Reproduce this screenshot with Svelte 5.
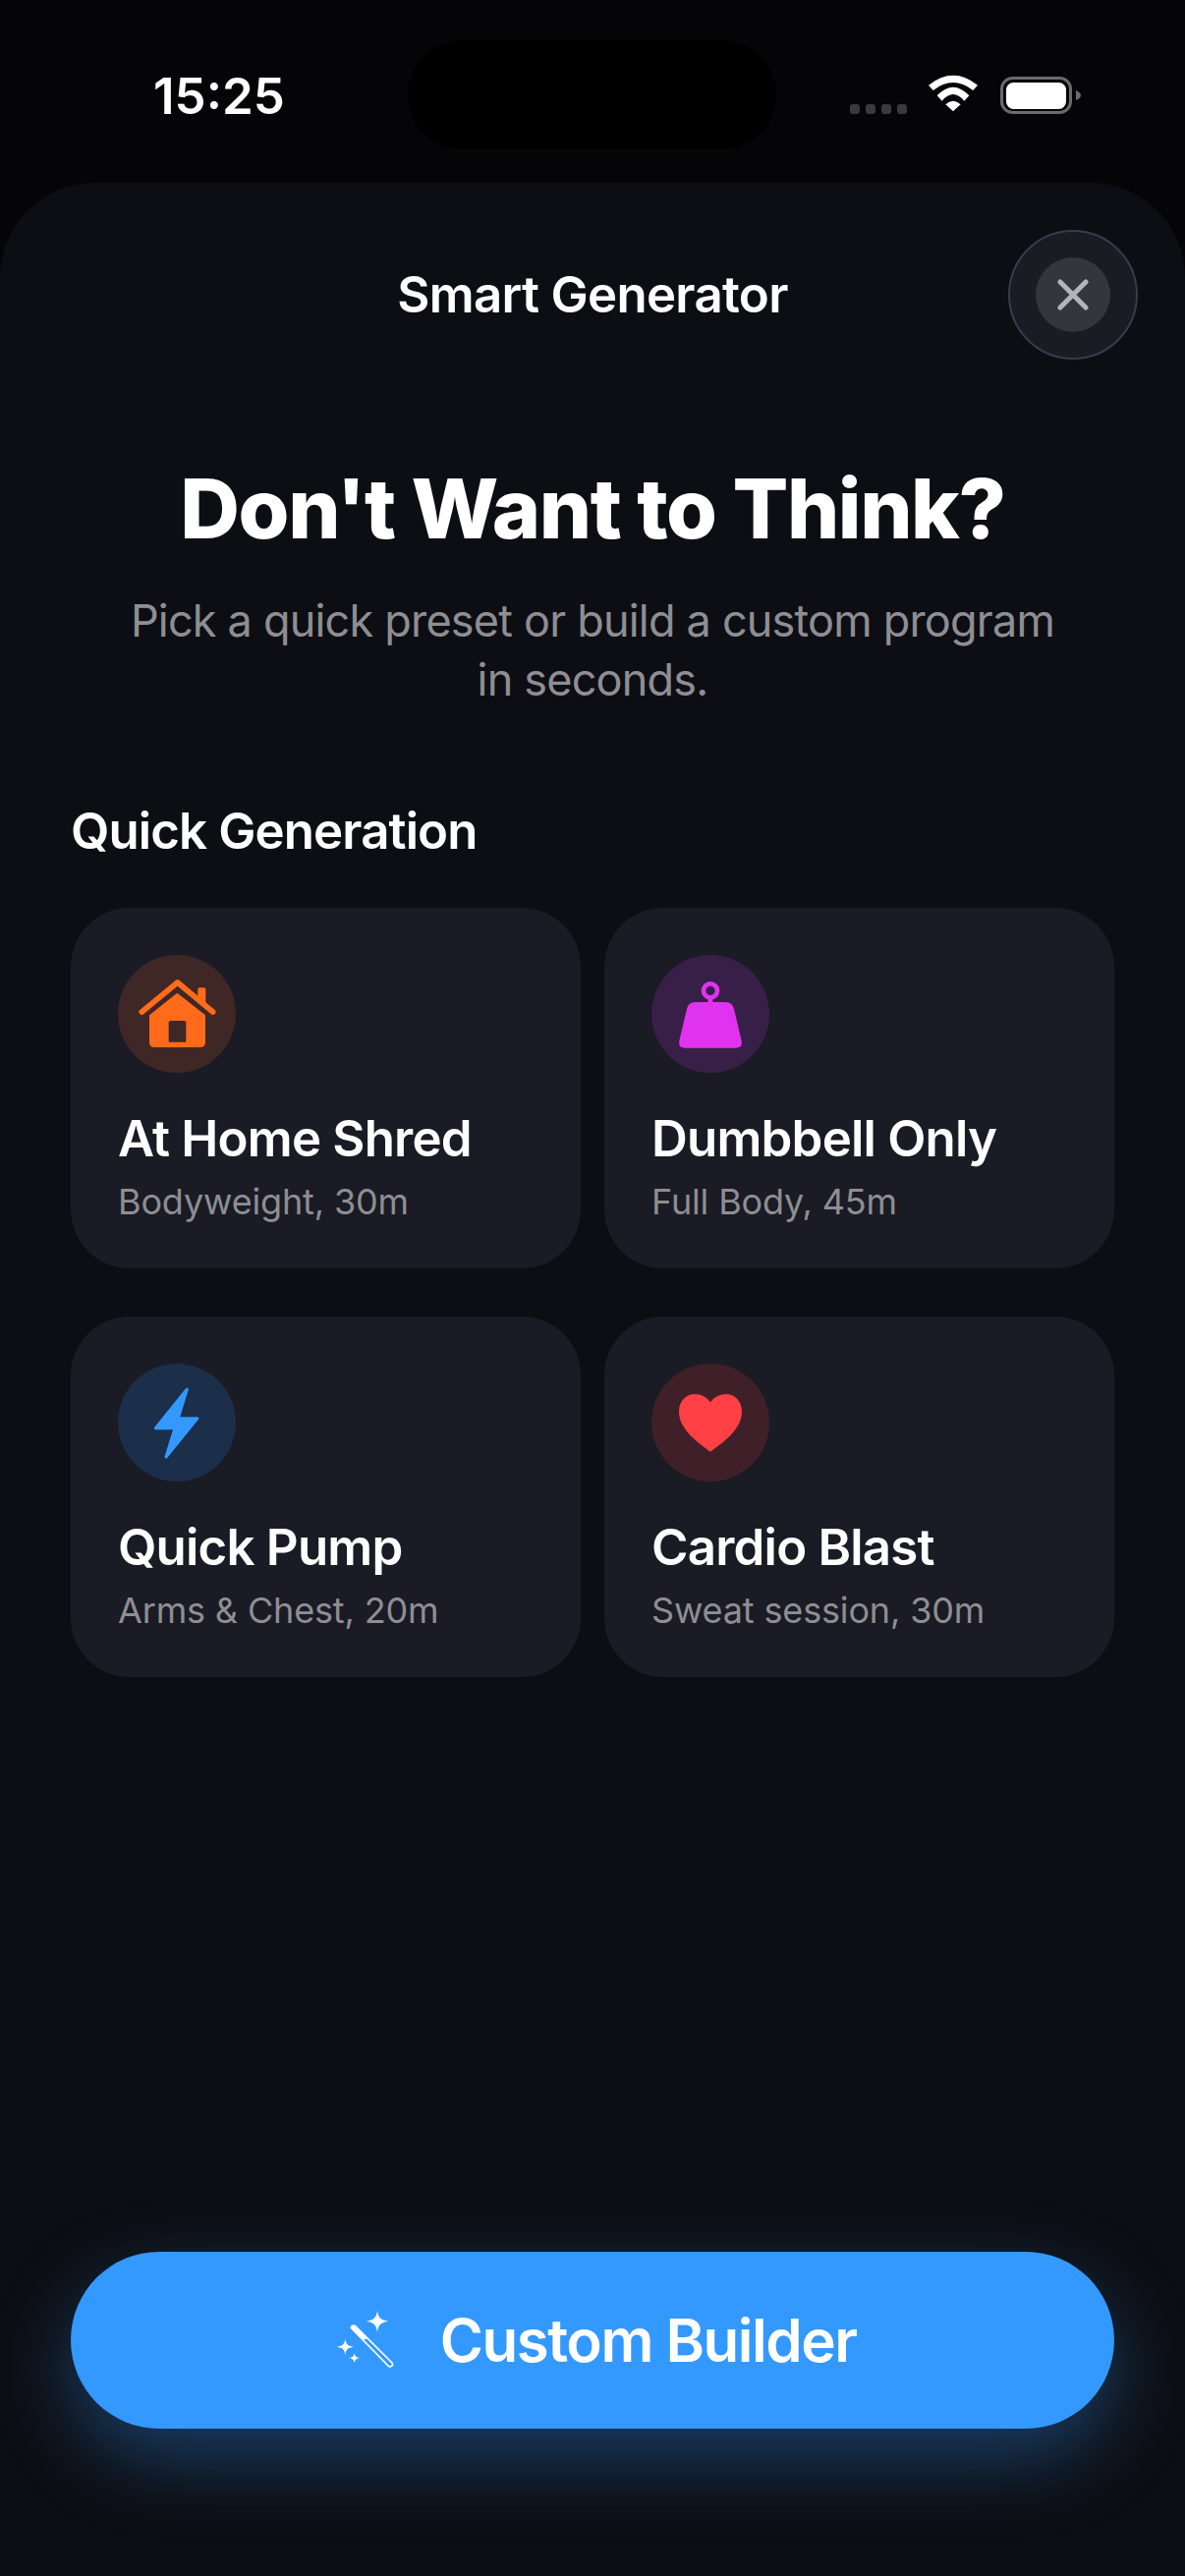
<script>
  const presets = [
    { id: 'home', title: 'At Home Shred', sub: 'Bodyweight, 30m' },
    { id: 'weight', title: 'Dumbbell Only', sub: 'Full Body, 45m' },
    { id: 'bolt', title: 'Quick Pump', sub: 'Arms & Chest, 20m' },
    { id: 'heart', title: 'Cardio Blast', sub: 'Sweat session, 30m' }
  ];
</script>

<div class="page">
  <div class="status">
    <span class="time">15:25</span>
    <div class="island"></div>
    <div class="indicators">
      <div class="signal"><i></i><i></i><i></i><i></i></div>
      <svg class="wifi" viewBox="310 80 165 125" width="55" height="41.67">
        <path fill="#fff" d="M316 118Q391 58 466 118L452 134Q391 86 330 134Z" />
        <path fill="#fff" d="M342 150Q391 98 440 150L425 166Q391 126 357 166Z" />
        <path fill="#fff" d="M368 177Q391 155 414 177L391 198Z" />
      </svg>
      <svg class="battery" viewBox="0 0 82 38" width="82" height="38">
        <rect x="1.5" y="1.5" width="70" height="35" rx="11" fill="none" stroke="#6b6b6e" stroke-width="3" />
        <rect x="6" y="6" width="61" height="27" rx="7.5" fill="#fff" />
        <path d="M77 14c3 1 5 3 5 5s-2 4-5 5z" fill="#6b6b6e" />
      </svg>
    </div>
  </div>

  <div class="sheet">
    <header class="bar">
      <span></span>
      <h2>Smart Generator</h2>
      <button class="close" aria-label="Close">
        <span class="close-inner">
          <svg viewBox="0 0 32 32" width="32" height="32">
            <path d="M3 3L29 29M29 3L3 29" stroke="#b4b4b8" stroke-width="5" stroke-linecap="round" />
          </svg>
        </span>
      </button>
    </header>

    <h1>Don't Want to Think?</h1>
    <p class="lead">Pick a quick preset or build a custom program<br />in seconds.</p>

    <h3>Quick Generation</h3>
    <div class="grid">
      {#each presets as p (p.id)}
        <div class="card">
          <div class="badge {p.id}">
            <svg viewBox="0 0 360 360" width="120" height="120">
              {#if p.id === 'home'}
                <path d="M73 174L182 84L290 174" fill="none" stroke="#ff6b1a" stroke-width="17" stroke-linecap="round" stroke-linejoin="round" />
                <rect x="244" y="100" width="24" height="48" rx="5" fill="#ff6b1a" />
                <path fill="#ff6b1a" fill-rule="evenodd" d="M96 184L181 116L267 184V266Q267 282 251 282H112Q96 282 96 266ZM160 201Q155 201 155 206V266H208V206Q208 201 203 201Z" />
              {:else if p.id === 'weight'}
                <circle cx="180" cy="109" r="21" fill="none" stroke="#e033f0" stroke-width="14" />
                <rect x="173" y="130" width="14" height="18" fill="#e033f0" />
                <path fill="#e033f0" d="M134 144H226Q247 144 252 165L275 262Q280 284 258 284H102Q80 284 85 262L108 165Q113 144 134 144Z" />
              {:else if p.id === 'bolt'}
                <path fill="#3399ff" stroke="#3399ff" stroke-width="9" stroke-linejoin="round" d="M211 78L184 167H243L147 285L174 197H115Z" />
              {:else}
                <path fill="#ff4045" d="M180 269C150 245 84 205 84 146C84 115 105 93 133 93C155 93 170 104 180 118C190 104 205 93 227 93C255 93 276 115 276 146C276 205 210 245 180 269Z" />
              {/if}
            </svg>
          </div>
          <div class="card-title">{p.title}</div>
          <div class="card-sub">{p.sub}</div>
        </div>
      {/each}
    </div>

    <button class="builder">
      <svg viewBox="120 95 190 190" width="63.33" height="63.33">
        <path fill="#fff" d="M252 101C255 122 262 129 285 133C262 137 255 144 252 166C249 144 242 137 219 133C242 129 249 122 252 101Z" />
        <path fill="#fff" d="M154 187C156 203 161 208 180 211C161 214 156 219 154 237C152 219 147 214 128 211C147 208 152 203 154 187Z" />
        <path fill="#fff" d="M182 229C183 239 187 243 199 245C187 247 183 251 182 263C181 251 177 247 165 245C177 243 181 239 182 229Z" />
        <path fill="none" stroke="#fff" stroke-width="5" stroke-linejoin="round" d="M172 153Q172 146 180 146Q184 146 187 150L297 260Q301 266 296 270Q290 274 285 269Z" />
        <path fill="#fff" d="M172 153Q172 146 180 146Q184 146 187 150L222 186L207 190Z" />
      </svg>
      <span>Custom Builder</span>
    </button>
  </div>
</div>

<style>
  :global(body) {
    margin: 0;
    background: #050507;
  }

  .page {
    position: relative;
    display: flex;
    flex-direction: column;
    width: 1206px;
    height: 2622px;
    overflow: hidden;
    font-family: Inter, 'Liberation Sans', sans-serif;
    color: #fff;
    background: #050507;
  }

  .status {
    display: flex;
    justify-content: space-between;
    align-items: flex-start;
    height: 186px;
    box-sizing: border-box;
    padding: 68px 106px 0 156px;
    flex: none;
  }

  .time {
    font-size: 51px;
    font-weight: 600;
    line-height: 60px;
  }

  .island {
    position: absolute;
    left: 415px;
    top: 41px;
    width: 375px;
    height: 111px;
    border-radius: 56px;
    background: #000;
  }

  .indicators {
    display: flex;
    align-items: flex-end;
    height: 38px;
    margin-top: 10px;
  }

  .signal {
    display: flex;
    gap: 6px;
    margin-right: 20px;
  }

  .signal i {
    width: 10px;
    height: 10px;
    border-radius: 3px;
    background: #3a3a3c;
  }

  .wifi {
    margin: 0 20px 0 0;
    display: block;
  }

  .battery {
    display: block;
  }

  .sheet {
    flex: 1;
    display: flex;
    flex-direction: column;
    box-sizing: border-box;
    padding: 48px 72px 150px;
    background: #0d0e13;
    border-radius: 96px 96px 0 0;
  }

  .bar {
    display: grid;
    grid-template-columns: 1fr auto 1fr;
    align-items: center;
    margin-right: -24px;
  }

  .bar h2 {
    margin: 0 0 0 -24px;
    font-size: 51px;
    font-weight: 600;
    letter-spacing: -0.7px;
    line-height: 64px;
  }

  .close {
    justify-self: end;
    display: flex;
    align-items: center;
    justify-content: center;
    width: 132px;
    height: 132px;
    padding: 0;
    border: 2px solid #3a3a4e;
    border-radius: 50%;
    background: #1a1b23;
  }

  .close-inner {
    display: flex;
    align-items: center;
    justify-content: center;
    width: 76px;
    height: 76px;
    border-radius: 50%;
    background: #35353d;
  }

  h1 {
    margin: 102px 0 0;
    text-align: center;
    font-size: 84px;
    font-weight: 800;
    letter-spacing: -1.45px;
    line-height: 100px;
  }

  .lead {
    margin: 34px 0 0;
    text-align: center;
    font-size: 45px;
    letter-spacing: -0.8px;
    line-height: 60px;
    color: #8e8e93;
  }

  h3 {
    margin: 92px 0 0;
    font-size: 51px;
    font-weight: 600;
    letter-spacing: -0.9px;
    line-height: 64px;
  }

  .grid {
    display: grid;
    grid-template-columns: 519px 519px;
    grid-auto-rows: 367px;
    column-gap: 24px;
    row-gap: 49px;
    margin-top: 46px;
  }

  .card {
    box-sizing: border-box;
    padding: 48px;
    border-radius: 60px;
    background: #1a1b24;
  }

  .badge {
    width: 120px;
    height: 120px;
    border-radius: 50%;
  }

  .badge svg {
    display: block;
  }

  .home {
    background: #3f2726;
  }

  .weight {
    background: #381f47;
  }

  .bolt {
    background: #1b2e4a;
  }

  .heart {
    background: #3f2028;
  }

  .card-title {
    margin-top: 35px;
    font-size: 51px;
    font-weight: 600;
    letter-spacing: -0.8px;
    line-height: 64px;
  }

  .card-sub {
    margin-top: 8px;
    font-size: 36px;
    letter-spacing: -0.15px;
    line-height: 48px;
    color: #8e8e93;
  }

  .builder {
    display: flex;
    align-items: center;
    justify-content: center;
    gap: 45px;
    width: 1062px;
    height: 180px;
    margin-top: auto;
    padding: 0 0 0 5px;
    border: 0;
    border-radius: 90px;
    background: #3399ff;
    color: #fff;
    font-family: inherit;
    font-size: 60px;
    font-weight: 600;
    letter-spacing: -1.5px;
    box-shadow: 0 30px 80px rgba(51, 153, 255, 0.35);
  }

  .builder svg {
    display: block;
  }
</style>
